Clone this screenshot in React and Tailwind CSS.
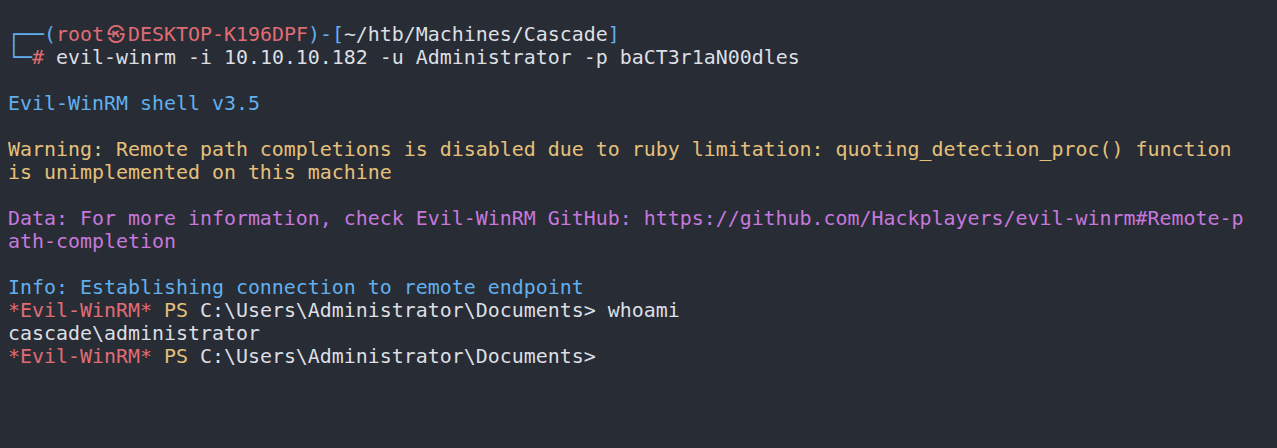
const red = "text-[#e06c75]";
const blue = "text-[#61afef]";
const yellow = "text-[#e5c07b]";
const purple = "text-[#c678dd]";

const Line = ({ children }) => <div className="h-[23px]">{children || " "}</div>;

export default function App() {
    return (
        <div className="w-[1277px] h-[448px] overflow-hidden bg-[#282c34] text-[#dcdfe4] pt-[23px] px-2 whitespace-pre text-[19.93px] leading-[23px] font-['DejaVu_Sans_Mono','Noto_Sans_CJK_SC',monospace]">
            {/* prompt */}
            <Line>
                <span className={blue}>┌──(</span>
                <span className={red}>root</span>
                <span className={`${red} inline-block w-[24px] text-center text-[18px]`}>㉿</span>
                <span className={red}>DESKTOP-K196DPF</span>
                <span className={blue}>)-[</span>
                <span>~/htb/Machines/Cascade</span>
                <span className={blue}>]</span>
            </Line>
            <Line>
                <span className={blue}>└─</span>
                <span className={red}>#</span>
                <span> evil-winrm -i 10.10.10.182 -u Administrator -p baCT3r1aN00dles</span>
            </Line>
            <Line />
            <Line><span className={blue}>Evil-WinRM shell v3.5</span></Line>
            <Line />
            <Line><span className={yellow}>Warning: Remote path completions is disabled due to ruby limitation: quoting_detection_proc() function</span></Line>
            <Line><span className={yellow}>is unimplemented on this machine</span></Line>
            <Line />
            <Line><span className={purple}>Data: For more information, check Evil-WinRM GitHub: https://github.com/Hackplayers/evil-winrm#Remote-p</span></Line>
            <Line><span className={purple}>ath-completion</span></Line>
            <Line />
            <Line><span className={blue}>Info: Establishing connection to remote endpoint</span></Line>
            <Line>
                <span className={red}>*Evil-WinRM*</span>
                <span className={yellow}> PS </span>
                <span>C:\Users\Administrator\Documents&gt; whoami</span>
            </Line>
            <Line>cascade\administrator</Line>
            <Line>
                <span className={red}>*Evil-WinRM*</span>
                <span className={yellow}> PS </span>
                <span>C:\Users\Administrator\Documents&gt;</span>
            </Line>
        </div>
    );
}
